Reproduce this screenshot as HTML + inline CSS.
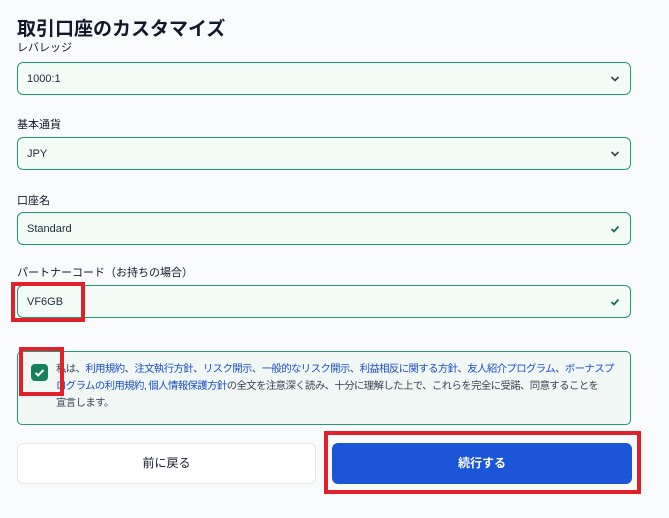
<!DOCTYPE html>
<html><head><meta charset="utf-8"><style>
*{box-sizing:border-box;margin:0;padding:0}
body{width:669px;height:518px;background:#f8fafc;font-family:"Liberation Sans","Noto Sans CJK JP",sans-serif;color:#1f2937;position:relative;overflow:hidden}
.a{position:absolute}
h1{position:absolute;left:17px;top:14px;font-size:19px;font-weight:700;color:#111827}
.lbl{position:absolute;left:17px;font-size:11px;color:#111827}
.inp{position:absolute;left:17px;width:614px;height:33px;border:1px solid #1f9a74;border-radius:6px;background:#f3fbf7;font-size:11px;color:#1f2937;padding-left:9px;line-height:33px}
.inp svg{position:absolute;right:10px;top:12px}
.red{position:absolute;border:4px solid #e0202a}
</style></head><body>
<h1>取引口座のカスタマイズ</h1>
<div class="lbl" style="top:39px">レバレッジ</div>
<div class="inp" style="top:62px">1000:1<svg width="10" height="8" viewBox="0 0 10 8"><path d="M1.5 2l3.5 3.5L8.5 2" fill="none" stroke="#374151" stroke-width="1.6"/></svg></div>
<div class="lbl" style="top:116px">基本通貨</div>
<div class="inp" style="top:137px">JPY<svg width="10" height="8" viewBox="0 0 10 8"><path d="M1.5 2l3.5 3.5L8.5 2" fill="none" stroke="#374151" stroke-width="1.6"/></svg></div>
<div class="lbl" style="top:192px">口座名</div>
<div class="inp" style="top:212px">Standard<svg width="10" height="8" viewBox="0 0 10 8"><path d="M1.5 4l2.5 2.5L8.5 1.5" fill="none" stroke="#166c52" stroke-width="1.8"/></svg></div>
<div class="lbl" style="top:264px">パートナーコード（お持ちの場合）</div>
<div class="inp" style="top:285px">VF6GB<svg width="10" height="8" viewBox="0 0 10 8"><path d="M1.5 4l2.5 2.5L8.5 1.5" fill="none" stroke="#166c52" stroke-width="1.8"/></svg></div>
<div class="red" style="left:11px;top:282px;width:74px;height:40px"></div>
<div class="a" style="left:17px;top:351px;width:614px;height:74px;border:1px solid #1f9a74;border-radius:5px;background:#f1f7f5"></div>
<div class="a" style="left:31px;top:364px;width:17px;height:17px;border-radius:4px;background:#16805d"><svg width="17" height="17" viewBox="0 0 17 17"><path d="M4.5 8.8l2.6 2.6L12.5 6" fill="none" stroke="#fff" stroke-width="2"/></svg></div>
<div class="a" style="left:56px;top:361px;white-space:nowrap;font-size:10.4px;letter-spacing:-0.6px;line-height:17px;color:#374151">私は、<span style="color:#1a4fc4">利用規約</span>、<span style="color:#1a4fc4">注文執行方針</span>、<span style="color:#1a4fc4">リスク開示</span>、<span style="color:#1a4fc4">一般的なリスク開示</span>、<span style="color:#1a4fc4">利益相反に関する方針</span>、<span style="color:#1a4fc4">友人紹介プログラム</span>、<span style="color:#1a4fc4">ボーナスプ<br>ログラムの利用規約</span>, <span style="color:#1a4fc4">個人情報保護方針</span>の全文を注意深く読み、十分に理解した上で、これらを完全に受諾、同意することを<br>宣言します。</div>
<div class="red" style="left:19px;top:347px;width:45px;height:49px"></div>
<div class="a" style="left:17px;top:443px;width:299px;height:41px;border:1px solid #e5e7eb;border-radius:6px;background:#fff;text-align:center;line-height:39px;font-size:12px;color:#111827">前に戻る</div>
<div class="a" style="left:332px;top:443px;width:300px;height:41px;border-radius:6px;background:#1b56d9;text-align:center;line-height:41px;font-size:12px;font-weight:700;color:#fff">続行する</div>
<div class="red" style="left:324px;top:431px;width:317px;height:63px"></div>
</body></html>
